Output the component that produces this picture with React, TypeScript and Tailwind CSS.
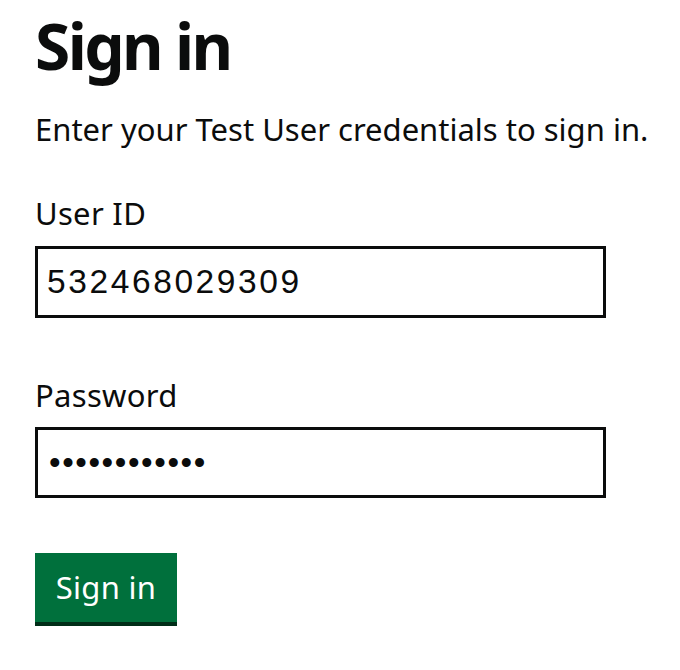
import React from "react";

export default function App() {
  return (
    <div className="min-h-[670px] w-[680px] bg-white pl-[35px] text-[#0b0c0c]" style={{ fontFamily: '"Noto Sans", Arial, sans-serif' }}>
      <h1 className="pt-[14px] text-[64px] font-bold leading-[64px] tracking-[-2.6px]">Sign in</h1>
      <p className="mt-[36px] text-[31px] leading-[31px]">Enter your Test User credentials to sign in.</p>
      <label className="mt-[53px] block text-[31px] leading-[31px] tracking-[0.3px]" htmlFor="uid">User ID</label>
      <input
        id="uid"
        readOnly
        defaultValue="532468029309"
        className="mt-[17px] block h-[72px] w-[571px] border-[3px] border-[#0b0c0c] bg-white pl-[9px] text-[33.5px] tracking-[2.6px] text-[#0b0c0c] outline-none"
        style={{ fontFamily: '"Liberation Sans", Arial, sans-serif' }}
      />
      <label className="mt-[62px] block text-[31px] leading-[31px] tracking-[0.3px]" htmlFor="pwd">Password</label>
      <input
        id="pwd"
        type="password"
        readOnly
        defaultValue="abcdefghijkl"
        className="mt-[16px] block h-[71px] w-[571px] border-[3px] border-[#0b0c0c] bg-white pl-[11px] text-[33px] tracking-[1.6px] text-[#0b0c0c] outline-none"
        style={{ fontFamily: '"Liberation Sans", Arial, sans-serif' }}
      />
      <button
        type="button"
        className="mt-[55px] flex h-[69px] w-[142px] items-center justify-center bg-[#00703c] text-[31px] leading-[31px] tracking-[0.3px] text-white shadow-[0_4px_0_#002d18]"
      >
        Sign in
      </button>
    </div>
  );
}
